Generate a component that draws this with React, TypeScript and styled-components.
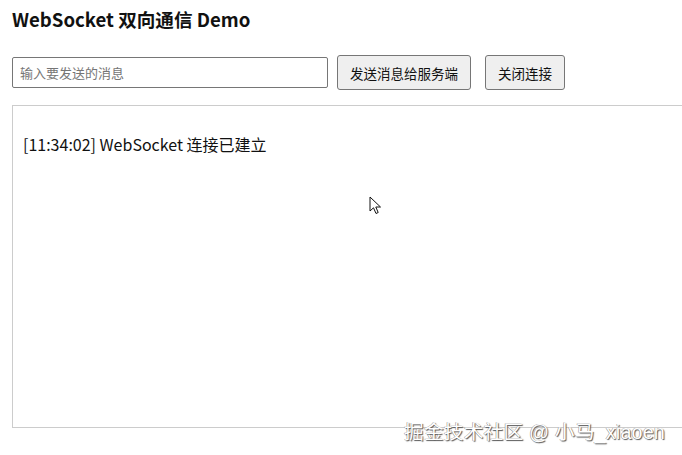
import React from "react";
import styled, { createGlobalStyle } from "styled-components";

const Global = createGlobalStyle`
  html, body { margin: 0; padding: 0; background: #fff; }
  body {
    font-family: "Noto Sans CJK SC", "Noto Sans", sans-serif;
    color: #111;
    overflow: hidden;
  }
`;

const Page = styled.div`
  position: relative;
  width: 682px;
  height: 455px;
  padding: 7px 12px 0 12px;
  box-sizing: border-box;
  overflow: hidden;
`;

const Title = styled.h1`
  margin: 0;
  font-size: 18.6px;
  font-weight: 700;
  line-height: 24px;
  color: #111;
`;

const Controls = styled.div`
  display: flex;
  align-items: center;
  margin-top: 24px;
  height: 35px;
`;

const MsgInput = styled.input`
  width: 316px;
  height: 31px;
  box-sizing: border-box;
  border: 1px solid #767676;
  border-radius: 2px;
  padding: 0 7px;
  font-family: "Noto Sans CJK SC", "Noto Sans", sans-serif;
  font-size: 13px;
  outline: none;
  &::placeholder { color: #757575; }
`;

const Btn = styled.button<{ $ml: number }>`
  margin-left: ${(p) => p.$ml}px;
  height: 35px;
  box-sizing: border-box;
  padding: 0 12px;
  border: 1px solid #767676;
  border-radius: 3px;
  background: #efefef;
  font-family: "Noto Sans CJK SC", "Noto Sans", sans-serif;
  font-size: 13.5px;
  color: #111;
`;

const LogBox = styled.div`
  margin-top: 15px;
  width: 700px;
  height: 323px;
  box-sizing: border-box;
  border: 1px solid #ccc;
  padding: 10px;
`;

const LogLine = styled.p`
  margin: 16px 0;
  font-size: 16px;
  line-height: 24px;
  color: #111;
`;

const Watermark = styled.div`
  position: absolute;
  left: 404px;
  top: 416px;
  font-family: "Liberation Sans", "Noto Sans CJK SC", sans-serif;
  font-size: 19.7px;
  color: #fff;
  white-space: nowrap;
  text-shadow: 1px 1px 1px #555, -0.5px -0.5px 0.5px #888;
  letter-spacing: 0.2px;
`;

const Cursor = styled.svg`
  position: absolute;
  left: 369px;
  top: 196px;
`;

export default function App() {
  return (
    <>
      <Global />
      <Page>
        <Title>WebSocket 双向通信 Demo</Title>
        <Controls>
          <MsgInput placeholder="输入要发送的消息" />
          <Btn $ml={9}>发送消息给服务端</Btn>
          <Btn $ml={14}>关闭连接</Btn>
        </Controls>
        <LogBox>
          <LogLine>[11:34:02] WebSocket 连接已建立</LogLine>
        </LogBox>
        <Watermark>掘金技术社区 @ 小马_xiaoen</Watermark>
        <Cursor width="14" height="20" viewBox="0 0 14 20">
          <path d="M1 1 L1 15 L4.5 11.8 L7 17.5 L9.2 16.5 L6.8 11 L11.5 11 Z" fill="#fff" stroke="#111" strokeWidth="1" strokeLinejoin="miter" />
        </Cursor>
      </Page>
    </>
  );
}
